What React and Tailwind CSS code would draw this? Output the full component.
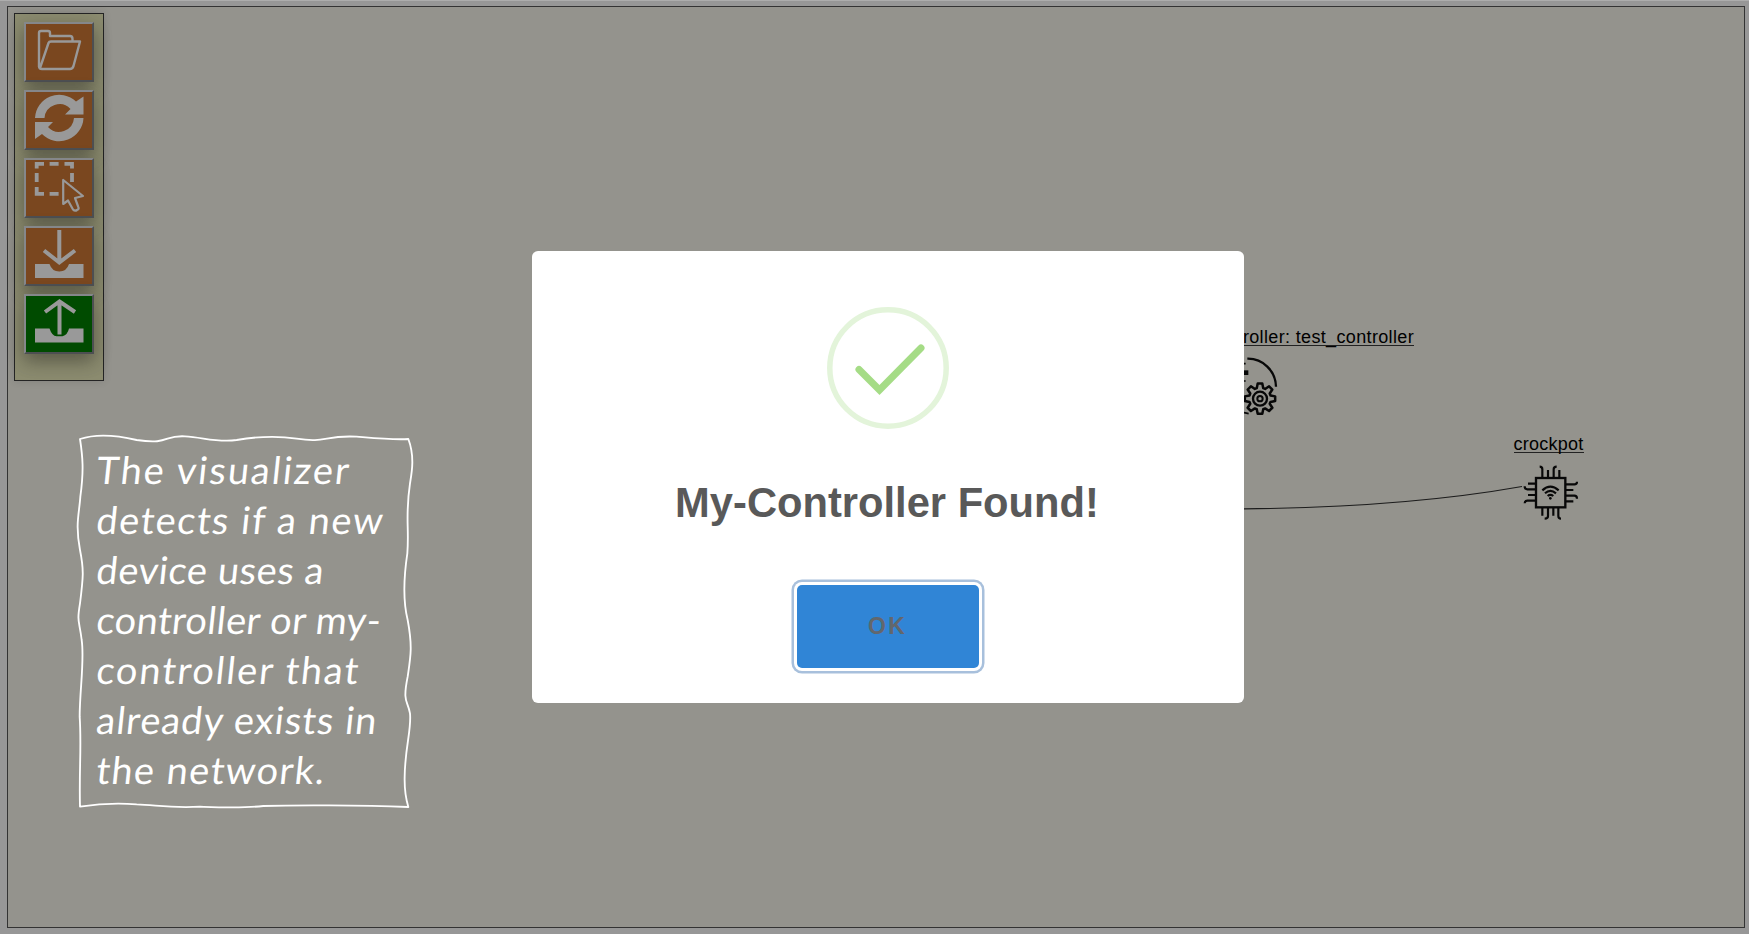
const NOTE_LINES = [
  ["The visualizer", "tracking-[2px]"],
  ["detects if a new", "tracking-[1.5px]"],
  ["device uses a", "tracking-[0.6px]"],
  ["controller or my-", "tracking-[0.4px]"],
  ["controller that", "tracking-[1.8px]"],
  ["already exists in", "tracking-[1px]"],
  ["the network.", "tracking-[1.4px]"],
];

function ToolButton({ color, children }) {
  return (
    <button className={`flex h-[60px] w-[70px] shrink-0 items-center justify-center border-2 border-t-[#85878a] border-l-[#85878a] border-r-[#4d4f52] border-b-[#4d4f52] shadow-[0_8px_16px_rgba(0,0,0,0.2),0_6px_20px_rgba(0,0,0,0.19)] ${color}`}>
      <svg width="66" height="56" viewBox="0 0 66 56" fill="none">{children}</svg>
    </button>
  );
}

function Toolbar() {
  return (
    <div className="flex h-[368px] w-[90px] flex-col gap-2 border border-[#242424] bg-[#8b8b6f] pt-[8px] pl-[9px] shadow-[0_0_8px_rgba(0,0,0,0.12)]">
      <ToolButton color="bg-[#7a471f]">
        <path d="M13 43V9Q13 7 15 7H22Q24 7 24 9V12H44Q46.500 12 46.500 15V16.500M14 44L22.500 19Q23 17.500 25 17.500H54L47.500 42Q46.500 45 44 45H16Q13 45 13 42" stroke="#999" strokeWidth="2.4" strokeLinejoin="round" />
      </ToolButton>
      <ToolButton color="bg-[#7a471f]">
        <path d="M9 26A24.300 24.300 0 0 1 50 9.500L57.500 4.500V22.500H39L44.500 17A15 15 0 0 0 18.500 26ZM57.500 26A24.300 24.300 0 0 1 16 42L9 47V30H27L22 35A15 15 0 0 0 48 26Z" fill="#999" />
      </ToolButton>
      <ToolButton color="bg-[#7a471f]">
        <path d="M10.700 8.500V3.800H18M23.600 3.800h9M38.500 3.800H46V8.500M10.700 13v9M46 13v9M10.700 27v6.800H18M23.600 33.800h9" stroke="#999" strokeWidth="3.800" />
        <path d="M37.200 20V44L42 40.500L47 49.500Q49 51.500 51 50Q53.500 49 52.300 47L49 38L57 36Z" stroke="#999" strokeWidth="2.200" strokeLinejoin="round" />
      </ToolButton>
      <ToolButton color="bg-[#7a471f]">
        <path d="M33.300 2V35M18 22.500L33.300 34.500L49 22.500" stroke="#999" strokeWidth="4" />
        <path d="M9 36H23.500Q26 43.500 33.300 43.500T43 36H57.500V50H9Z" fill="#999" />
      </ToolButton>
      <ToolButton color="bg-[#004b00]">
        <path d="M33.500 5V38.500M19 16L33.500 5.500L49 16" stroke="#999" strokeWidth="4" />
        <path d="M9 32.500H23.500Q26 40 30.500 40.300H36.500Q41.500 39 43 32.500H57.500V46.500H9Z" fill="#999" />
      </ToolButton>
    </div>
  );
}

function Note() {
  return (
    <div className="absolute top-[420px] left-[60px] h-[400px] w-[370px]">
      <svg className="absolute inset-0" width="370" height="400" viewBox="0 0 1110 1200" fill="none">
        <path d="M60 57C110 40 180 48 230 60C330 75 310 45 375 49C430 52 470 68 530 60C600 48 660 48 710 56C800 70 790 45 890 50C950 55 1000 60 1045 57C1065 110 1055 160 1050 190C1035 290 1048 320 1042 400C1030 480 1028 540 1043 600C1058 680 1052 710 1043 770C1027 850 1043 840 1050 880C1055 930 1035 980 1034 1070C1033 1110 1037 1135 1045 1161C900 1155 700 1155 610 1158C550 1165 480 1162 420 1160C330 1165 290 1155 230 1153C170 1148 110 1152 60 1160C57 1050 65 980 59 890C59 810 74 720 65 660C58 600 50 610 60 550C70 470 72 450 60 390C45 310 58 280 61 230C72 150 68 110 60 57Z" stroke="#fff" strokeWidth="5.500" strokeLinejoin="round" />
      </svg>
      <div className="flex origin-top-left -skew-x-6 flex-col pt-[24px] pl-[42px] font-['Segoe_Print','Ink_Free',Lato,sans-serif] text-[38px] leading-[50px] text-white">
        {NOTE_LINES.map(([text, tracking], i) => (
          <p key={text} className={`whitespace-nowrap ${tracking}`} style={{ marginLeft: i * 5.25 }}>{text}</p>
        ))}
      </div>
    </div>
  );
}

function gearPath(cx, cy, teeth, outer, inner) {
  const points = [];
  for (let i = 0; i < teeth; i++) {
    const base = (i / teeth) * Math.PI * 2 - Math.PI / 2;
    [[-0.3, inner], [-0.15, outer], [0.15, outer], [0.3, inner]].forEach(([offset, r]) => {
      points.push(`${cx + r * Math.cos(base + offset)} ${cy + r * Math.sin(base + offset)}`);
    });
  }
  return `M${points.join("L")}Z`;
}

function Devices() {
  return (
    <>
      <svg className="absolute inset-0" width="1749" height="934" fill="none">
        <path d="M1200 509Q1390 510 1522 486.500" stroke="#1c1c1c" strokeWidth="1.200" />
      </svg>
      <p className="absolute top-[329px] right-[335px] border-b border-[#222] font-['Liberation_Sans',Arial,sans-serif] text-[18px] leading-[16px] tracking-[0.35px] whitespace-nowrap text-black">my-controller: test_controller</p>
      <svg className="absolute top-[355px] left-[1244px]" width="35" height="61.667" viewBox="42 135 105 185" fill="none" stroke="#080808">
        <path d="M52 146C98 145 137 182 138 230" strokeWidth="7" />
        <path d="M40 188h15" strokeWidth="14" />
        <path d="M40 161h7M40 213h7M42 308l14 3" strokeWidth="5" />
        <path d={gearPath(90, 266, 8, 46, 33)} strokeWidth="7.500" strokeLinejoin="round" />
        <circle cx="90" cy="266" r="21" strokeWidth="7" />
        <circle cx="90" cy="266" r="8" strokeWidth="6" />
      </svg>
      <p className="absolute top-[436px] left-[1513.5px] border-b border-[#222] font-['Liberation_Sans',Arial,sans-serif] text-[18px] leading-[16px] tracking-[0.25px] text-black">crockpot</p>
      <svg className="absolute top-[465px] left-[1523px]" width="56" height="56" viewBox="129 135 168 168" fill="none" stroke="#080808" strokeWidth="6.500">
        <rect x="168" y="174" width="88" height="88" strokeWidth="7" />
        <path d="M187 174V148Q187 140 179 140M204 174V150M221 174V148Q221 140 230 140M238 174V150" />
        <path d="M187 262V287M204 262V288Q204 296 194 296M220 262V287M235 262V288Q235 296 243 296" />
        <path d="M168 191H144M168 208H142Q134 208 134 199M168 225H144M168 242H142Q134 242 134 250" />
        <path d="M256 193H283Q291 193 291 185M256 210H280M256 227H283Q291 227 291 236M256 244H280" />
        <path d="M187 211Q211 189 236 211M195 220Q211 205 228 220M203 228Q211 221 220 228" />
        <circle cx="211" cy="235" r="4" fill="#080808" stroke="none" />
      </svg>
    </>
  );
}

function Dialog() {
  return (
    <div className="absolute inset-0 flex items-start justify-center pt-[251px] pl-[27px]">
      <div className="flex h-[452px] w-[712px] flex-col items-center rounded-[6px] bg-white pt-[56px] font-['Liberation_Sans',Arial,sans-serif]">
        <svg width="122" height="122" viewBox="0 0 122 122" fill="none">
          <circle cx="61" cy="61" r="58.200" stroke="#e3f4da" strokeWidth="5.500" />
          <path d="M32 62.500L52.500 83L94 41" stroke="#a5dc86" strokeWidth="7" strokeLinecap="round" />
        </svg>
        <h2 className="mt-[48px] pr-[2px] text-[41.7px] leading-[52px] font-bold whitespace-nowrap text-[#595959]">My-Controller Found!</h2>
        <button className="mt-[56px] mr-[1px] flex h-[83px] w-[182px] items-center justify-center rounded-[5px] bg-[#3085d6] text-[23px] font-bold tracking-[2.3px] text-[#62676d] shadow-[0_0_0_3px_#fff,0_0_0_5.5px_#a8c0dc]">OK</button>
      </div>
    </div>
  );
}

export default function App() {
  return (
    <div className="relative h-[934px] w-[1749px] overflow-hidden bg-[#979797] pt-[6px] pl-[7px] shadow-[inset_0_1px_0_#adadad]">
      <main className="h-[922px] w-[1738px] border border-[#333] bg-[#94938d] pt-[5.5px] pl-[6px]">
        <Toolbar />
      </main>
      <Devices />
      <Note />
      <Dialog />
    </div>
  );
}
